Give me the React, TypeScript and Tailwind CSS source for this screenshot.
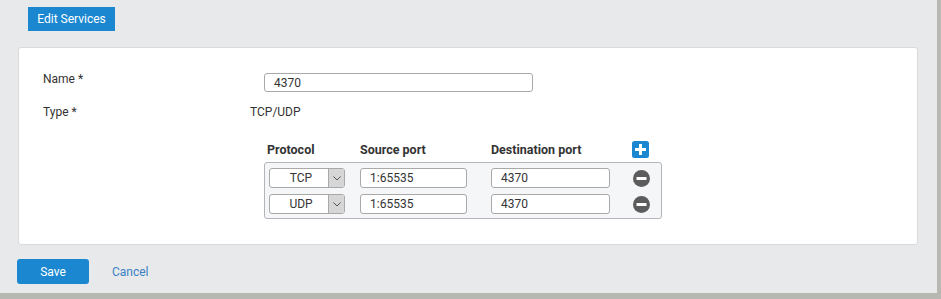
import React from "react";

const rows = [
  { proto: "TCP", src: "1:65535", dst: "4370" },
  { proto: "UDP", src: "1:65535", dst: "4370" },
];

function MinusIcon() {
  return (
    <svg width="17" height="17" viewBox="0 0 17 17">
      <circle cx="8.5" cy="8.5" r="8.5" fill="#5c5c5c" />
      <rect x="3.5" y="7" width="10" height="3" rx="0.5" fill="#fff" />
    </svg>
  );
}

function PlusIcon() {
  return (
    <svg width="17" height="17" viewBox="0 0 17 17">
      <rect x="0" y="0" width="17" height="17" rx="2.5" fill="#1a87d0" />
      <rect x="7" y="3" width="3" height="11" fill="#fff" />
      <rect x="3" y="7" width="11" height="3" fill="#fff" />
    </svg>
  );
}

export default function App() {
  return (
    <div className="w-[941px] h-[299px] bg-[#b8b8b2] font-['Roboto',sans-serif] text-[12px] text-[#333]">
      <div className="w-[937px] h-[293px] bg-[#e8e9eb] flex flex-col">
        {/* Header button */}
        <div className="pt-[7px] pl-[28px]">
          <button className="h-[24px] w-[87px] bg-[#1a87d0] text-white text-[12px]">Edit Services</button>
        </div>

        {/* Form card */}
        <div className="mt-[16px] ml-[18px] w-[900px] h-[198px] bg-white border border-[#d9dadc] rounded-[3px] pl-[24px]">
          <div className="flex items-center mt-[25px]">
            <div className="w-[221px] -mt-[8px]">Name *</div>
            <input
              readOnly
              value="4370"
              className="w-[269px] h-[19px] border border-[#a9a9a9] rounded-[3px] px-[9px] text-[12px] outline-none"
            />
          </div>

          <div className="flex items-center mt-[10px] h-[20px]">
            <div className="w-[207px]">Type *</div>
            <div>TCP/UDP</div>
          </div>

          <div className="ml-[221px] mt-[20px] w-[400px]">
            <div className="flex items-end h-[20px] font-bold pl-[3px] text-[12.5px]">
              <div className="w-[93px] pb-[2px]">Protocol</div>
              <div className="w-[131px] pb-[2px]">Source port</div>
              <div className="w-[141px] pb-[2px]">Destination port</div>
              <div className="pb-[4px]">
                <PlusIcon />
              </div>
            </div>
            <div className="w-[398px] h-[57px] bg-[#f5f6f8] border border-[#b3b5b9] rounded-[3px] pl-[4px] pt-[5px] flex flex-col gap-[6px]">
              {rows.map((r) => (
                <div key={r.proto} className="flex items-center h-[20px]">
                  <div className="w-[76px] h-[20px] flex border border-[#a9a9a9] rounded-[3px] bg-white overflow-hidden">
                    <div className="flex-1 text-center pl-[4px] leading-[18px]">{r.proto}</div>
                    <div className="w-[16px] bg-[#d6d6d6] border-l border-[#a9a9a9] flex items-center justify-center">
                      <svg width="8" height="5" viewBox="0 0 8 5">
                        <path d="M0.5 0.5 L4 4 L7.5 0.5" stroke="#555" strokeWidth="1" fill="none" />
                      </svg>
                    </div>
                  </div>
                  <input
                    readOnly
                    value={r.src}
                    className="ml-[15px] w-[107px] h-[20px] border border-[#a9a9a9] rounded-[3px] px-[9px] text-[12px] bg-white outline-none"
                  />
                  <input
                    readOnly
                    value={r.dst}
                    className="ml-[24px] w-[119px] h-[20px] border border-[#a9a9a9] rounded-[3px] px-[9px] text-[12px] bg-white outline-none"
                  />
                  <div className="ml-[23px]">
                    <MinusIcon />
                  </div>
                </div>
              ))}
            </div>
          </div>
        </div>

        {/* Footer */}
        <div className="flex items-center mt-[14px] ml-[17px]">
          <button className="w-[72px] h-[25px] bg-[#1a87d0] text-white rounded-[3px] text-[12px]">Save</button>
          <span className="ml-[23px] text-[#3a80c6]">Cancel</span>
        </div>
      </div>
    </div>
  );
}
